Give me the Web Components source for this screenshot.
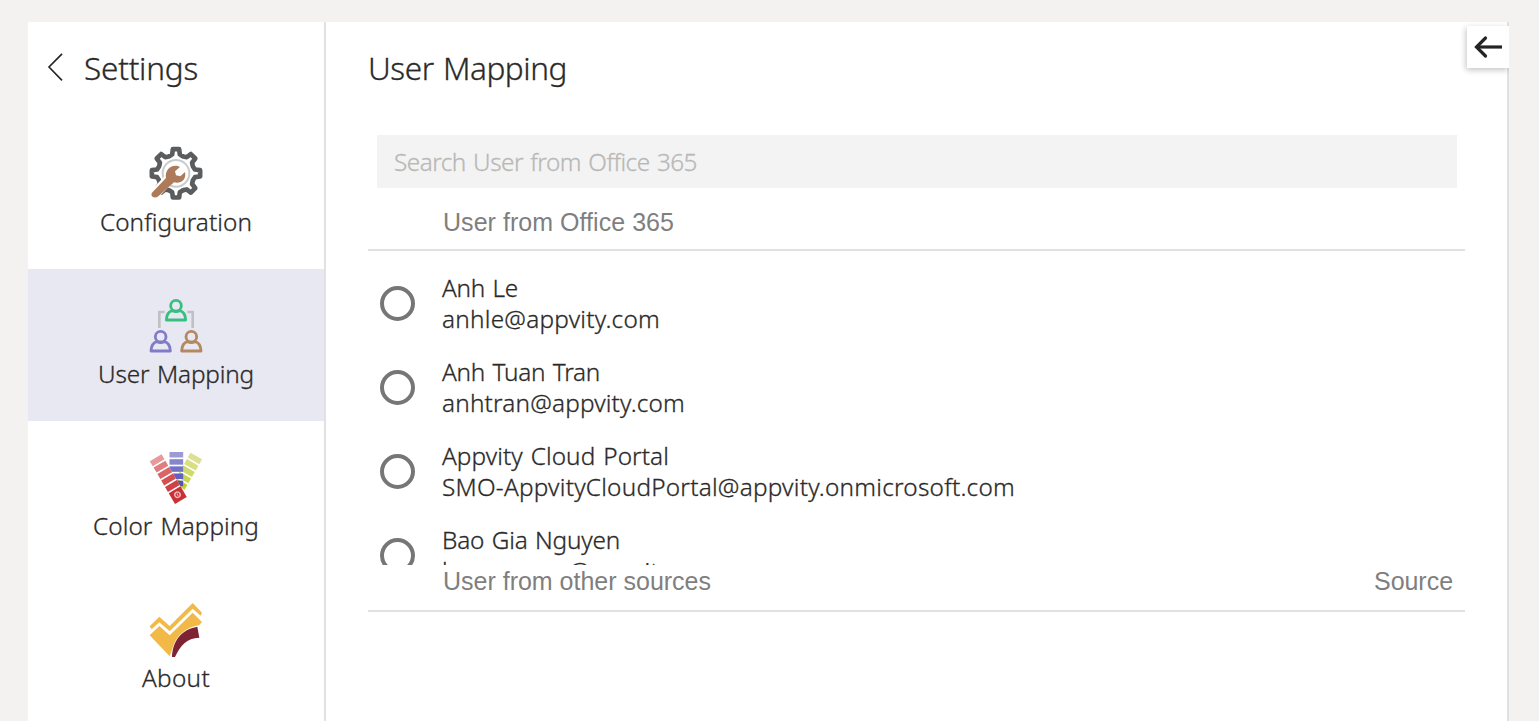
<!DOCTYPE html>
<html lang="en">
<head>
<meta charset="utf-8">
<title>User Mapping</title>
<style>
html,body{margin:0;height:100%;overflow:hidden;background:#f3f2f1}
body{font-family:"Noto Sans","Open Sans",sans-serif;font-weight:300;-webkit-text-stroke-width:.3px;color:#2b2a29;font-size:24.3px;line-height:31px;word-spacing:1.5px}
</style>
</head>
<body>
<settings-app></settings-app>
<script>
const define = (name, html, ready) => customElements.define(name, class extends HTMLElement {
  connectedCallback() {
    if (this.shadowRoot) return;
    const t = document.createElement('template');
    t.innerHTML = html;
    this.attachShadow({mode: 'open'}).append(t.content.cloneNode(true));
    if (ready) ready(this);
  }
});

/* A one-line label whose tracking is adjusted to a given width. */
define('fit-text', `<style>:host{display:inline-block;white-space:pre}span{display:inline-block}</style><span><slot></slot></span>`, el => {
  const s = el.shadowRoot.querySelector('span');
  const want = +el.getAttribute('width');
  const n = el.textContent.length;
  s.style.letterSpacing = ((want - s.getBoundingClientRect().width) / n) + 'px';
});

const gear = () => {
  let d = '';
  for (let i = 0; i < 8; i++) {
    const a = i * Math.PI / 4 - Math.PI / 2;
    [[-.37,55],[-.2,58],[-.13,73],[.13,73],[.2,58],[.37,55]].forEach(([o,r], k) => {
      d += (i || k ? 'L' : 'M') + (120 + r*Math.cos(a+o)).toFixed(1) + ' ' + (112 + r*Math.sin(a+o)).toFixed(1);
    });
  }
  return d + 'Z';
};
const person = (x, y, c) => `<g transform="translate(${x} ${y})" fill="none" stroke="${c}" stroke-width="8.5"><circle cx="0" cy="-13" r="16"/><path d="M-29 30C-28 14 -20 4 -11 2Q0 7 11 2C20 4 28 14 29 30Z" stroke-linejoin="round"/></g>`;
const strip = (colors, w, h) => colors.map((c, i) => `<rect x="${-w/2}" y="${i*h}" width="${w}" height="${h-5}" fill="${c}"/>`).join('');
const icons = {
  gear: `<path d="${gear()}" fill="#fff" stroke="#5a5c5e" stroke-width="14" stroke-linejoin="round"/><circle cx="120" cy="112" r="40" fill="#fff" stroke="#c9cbcc" stroke-width="6"/><path d="M56 174L104 124" stroke="#fff" stroke-width="31" stroke-linecap="round"/><path d="M50 168L90 126C86 106 101 86 125 90L132 93L117 106L120 118L133 121L147 108C152 130 136 144 114 139L67 181C55 190 39 180 50 168Z" fill="#ad7b5a"/>`,
  people: `<path d="M86 72H70V120M154 72H170V120" fill="none" stroke="#c1c1c5" stroke-width="8"/>` + person(120,66,'#37bf82') + person(74,159,'#817bc8') + person(166,159,'#b48860'),
  colors: `<g transform="translate(181 48) rotate(30)">${strip(['#dce095','#d8df80','#d0da6a','#cad64f','#c3d034','#bdcb28'],40,22)}</g><g transform="translate(121 36)">${strip(['#9c9bd5','#8786cd','#7373c5','#6261bd','#5553b5'],41,21.5)}</g><path d="M40 66L77 43L152 171L111 197Z" fill="#fff"/><g transform="translate(59 53) rotate(-30.5)">${strip(['#e59a9c','#df7e80','#d96567','#d25052','#ce4245'],41,22.5)}<rect x="-20.5" y="112" width="41" height="37" fill="#c83236"/><circle cx="0" cy="129" r="8" fill="none" stroke="#efc0c1" stroke-width="4"/><path d="M0 125v8" stroke="#efc0c1" stroke-width="3"/></g>`,
  check: `<path d="M41 103L70 74L101 102L170 33L198 62L194 71L170 50L101 118L70 91L47 112Z" fill="#f3b947"/><path d="M41 130L70 102L101 130L170 62L198 90L189 100C151 105 119 130 108 174L101 193Z" fill="#f3b947"/><path d="M108 195C110 148 134 113 184 104L190 137C152 138 133 160 117 195Z" fill="#7d2333"/>`
};

define('nav-item', `<style>
:host{display:flex;flex-direction:column;align-items:center;height:152px;box-sizing:border-box;padding-top:19px}
:host([active]){background:#e8e8f2}
svg{display:block;width:80px;height:75px;flex:none}
.l{margin-top:-5px}
</style><svg viewBox="0 0 240 225"></svg><div class="l"><slot></slot></div>`,
  el => { el.shadowRoot.querySelector('svg').innerHTML = icons[el.getAttribute('icon')]; });

define('side-nav', `<style>
:host{display:block;width:296px;background:#fff;border-right:2px solid #e1e1e1;flex:none}
header{display:flex;height:95px;box-sizing:border-box;padding:26px 0 0 19px;font-size:31.5px;line-height:40px}
svg{width:16px;height:28px;margin-top:5px;margin-right:21px}
</style><header><svg viewBox="0 0 16 28" fill="none" stroke="#252423" stroke-width="1.6"><path d="M15 .9L2 14L15 27.4"/></svg><fit-text width="114">Settings</fit-text></header>
<nav>
<nav-item icon="gear"><fit-text width="152">Configuration</fit-text></nav-item>
<nav-item icon="people" active><fit-text width="156">User Mapping</fit-text></nav-item>
<nav-item icon="colors"><fit-text width="166">Color Mapping</fit-text></nav-item>
<nav-item icon="check"><fit-text width="68">About</fit-text></nav-item>
</nav>`);

define('search-box', `<style>:host{display:block;box-sizing:border-box;height:53px;width:1080px;margin-left:9px;padding:11px 17px;background:#f3f3f3;color:#b9b8b7}</style><slot></slot>`);

define('list-head', `<style>:host{display:flex;justify-content:space-between;box-sizing:border-box;border-bottom:2px solid #e1e1e1;padding:0 12px 0 75px;font:400 25px/30px "Liberation Sans",sans-serif;color:#7f7f7f;word-spacing:0;-webkit-text-stroke-width:0}</style><slot></slot>`);

define('user-row', `<style>
:host{display:flex;align-items:center;height:84px;padding-left:12px}
i{box-sizing:border-box;width:35px;height:35px;border:4px solid #767676;border-radius:50%;margin-right:27px}
.t{display:flex;flex-direction:column}
</style><i></i><div class="t"><slot name="name"></slot><slot name="mail"></slot></div>`);

define('user-mapping', `<style>
:host{display:block;flex:1;background:#fff;border-right:2px solid #e1e1e1;padding:26px 42px 0;box-sizing:border-box}
h1{margin:0;height:87px;font-size:31.5px;line-height:40px;font-weight:inherit}
.first{height:63px;padding-top:19px}
.list{height:314px;overflow:hidden;box-sizing:border-box;padding-top:10px}
.second{height:47px;padding-top:1px}
</style>
<h1><fit-text width="199">User Mapping</fit-text></h1>
<search-box><fit-text width="303">Search User from Office 365</fit-text></search-box>
<list-head class="first"><fit-text width="231">User from Office 365</fit-text></list-head>
<div class="list">
<user-row><fit-text slot="name" width="76">Anh Le</fit-text><fit-text slot="mail" width="218">anhle@appvity.com</fit-text></user-row>
<user-row><fit-text slot="name" width="158">Anh Tuan Tran</fit-text><fit-text slot="mail" width="243">anhtran@appvity.com</fit-text></user-row>
<user-row><fit-text slot="name" width="227">Appvity Cloud Portal</fit-text><fit-text slot="mail" width="573">SMO-AppvityCloudPortal@appvity.onmicrosoft.com</fit-text></user-row>
<user-row><fit-text slot="name" width="178">Bao Gia Nguyen</fit-text><fit-text slot="mail" width="282">baonguyen@appvity.com</fit-text></user-row>
</div>
<list-head class="second"><fit-text width="268">User from other sources</fit-text><fit-text width="79">Source</fit-text></list-head>`);

define('collapse-button', `<style>
:host{position:absolute;right:0;top:4px;width:42px;height:42px;background:#fff;box-shadow:-1px 2px 6px rgba(0,0,0,.24);clip-path:inset(-8px 0 -10px -10px)}
svg{display:block}
</style><svg width="42" height="42" viewBox="0 0 42 42" fill="none" stroke="#252423" stroke-width="3.2"><path d="M35 21H10" /><path d="M18.5 12L9.5 21L18.5 30" stroke-linecap="round"/></svg>`);

define('settings-app', `<style>
:host{display:block;height:721px;box-sizing:border-box;padding:22px 30px 0 28px;background:#f3f2f1}
.w{display:flex;height:100%;position:relative}
</style><div class="w"><side-nav></side-nav><user-mapping></user-mapping><collapse-button></collapse-button></div>`);
</script>
</body>
</html>
